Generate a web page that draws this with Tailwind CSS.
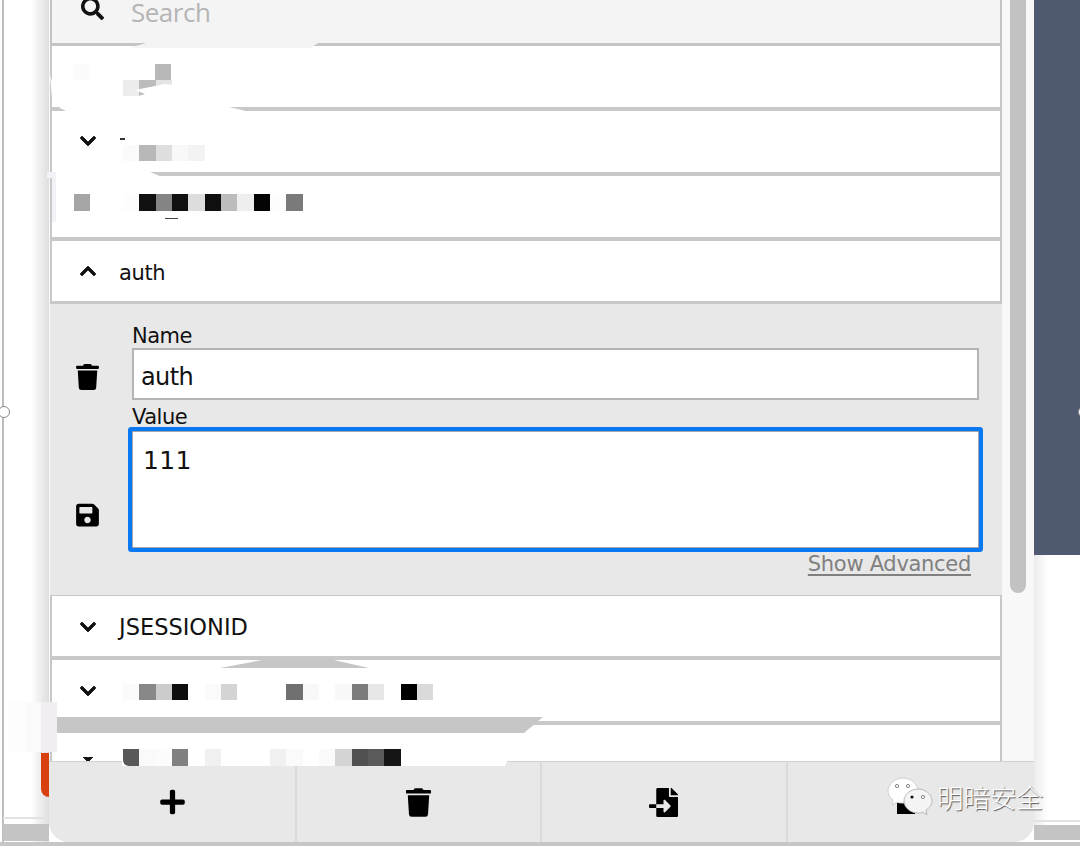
<!DOCTYPE html>
<html lang="en">
<head>
<meta charset="utf-8">
<script src="https://cdn.jsdelivr.net/npm/@tailwindcss/browser@4"></script>
</head>
<body class="bg-white">
<div class="relative w-[1080px] h-[846px] overflow-hidden bg-white font-['DejaVu_Sans',sans-serif] text-[#111]">

  <!-- page behind the panel -->
  <div class="absolute left-[4px] top-0 w-[45px] h-[846px] bg-gradient-to-r from-white from-60% to-[#dedede]"></div>
  <div class="absolute left-[2px] top-0 w-[1.5px] h-[842px] bg-[#bdbdbd]"></div>
  <div class="absolute left-[-2px] top-[406px] w-3 h-3 rounded-full bg-white border border-[#8a8a8a]"></div>
  <div class="absolute left-[41px] top-[753px] w-[12px] h-[44px] rounded-bl-[8px] bg-[#d9400f]"></div>
  <div class="absolute left-[3px] top-[817px] w-[46px] h-[2px] bg-[#e2e2e2]"></div>
  <div class="absolute left-[3px] top-[824px] w-[46px] h-[17px] bg-[#c4c4c4]"></div>
  <div class="absolute left-0 top-[842px] w-[1080px] h-[4px] bg-[#c6c6c6]"></div>
  <div class="absolute left-[1034px] top-0 w-[46px] h-[555px] bg-[#4f5970]"></div>
  <div class="absolute left-[1034px] top-[555px] w-[46px] h-[270px] bg-gradient-to-r from-[#ececec] from-0% to-white to-30%"></div>
  <div class="absolute left-[1034px] top-[820px] w-[46px] h-[2px] bg-[#e2e2e2]"></div>
  <div class="absolute left-[1034px] top-[825px] w-[46px] h-[15px] bg-[#c4c4c4]"></div>
  <div class="absolute left-[1078px] top-[406px] w-3 h-3 rounded-full bg-white border border-[#8a8a8a]"></div>

  <!-- panel -->
  <div class="absolute left-[49px] top-0 w-[985px] h-[842px] flex flex-col rounded-b-[20px] overflow-hidden bg-[#f8f8f8]">
    <div class="flex h-[761px] shrink-0">
      <!-- list -->
      <div class="w-[953px] pl-[1px] shrink-0 overflow-hidden">
        <!-- search -->
        <div class="h-[46px] bg-[#f4f4f4] border-x-2 border-b-[3px] border-[#c4c4c4] relative">
          <svg viewBox="0 0 512 512" class="absolute left-[29px] top-[-3px] w-[23px] h-[23px] fill-[#111]"><path d="M505 442.7L405.3 343c-4.5-4.5-10.6-7-17-7H372c27.6-35.3 44-79.7 44-128C416 93.1 322.9 0 208 0S0 93.1 0 208s93.1 208 208 208c48.3 0 92.7-16.4 128-44v16.3c0 6.4 2.5 12.5 7 17l99.7 99.7c9.4 9.4 24.6 9.4 33.9 0l28.3-28.3c9.4-9.4 9.4-24.6.1-34zM208 336c-70.7 0-128-57.2-128-128 0-70.7 57.2-128 128-128 70.7 0 128 57.2 128 128 0 70.7-57.2 128-128 128z"/></svg>
          <span class="absolute left-[79px] top-0 text-[26px] leading-[24px] tracking-[-0.5px] text-[#b4b4b4] font-['Open_Sans',sans-serif]">Search</span>
        </div>
        <!-- rows -->
        <div class="h-[65px] bg-white border-x-2 border-b-[4px] border-[#c8c8c8]"></div>
        <div class="h-[65px] bg-white border-x-2 border-b-[4px] border-[#c8c8c8] flex items-center pl-[28px]">
          <svg viewBox="0 0 448 512" class="w-[16px] h-[18px] mt-[-1px] fill-[#111] stroke-[#111] stroke-[24]"><path d="M207.029 381.476L12.686 187.132c-9.373-9.373-9.373-24.569 0-33.941l22.667-22.667c9.357-9.357 24.522-9.375 33.901-.04L224 284.505l154.745-154.021c9.379-9.335 24.544-9.317 33.901.04l22.667 22.667c9.373 9.373 9.373 24.569 0 33.941L240.971 381.476c-9.373 9.372-24.569 9.372-33.942 0z"/></svg>
        </div>
        <div class="h-[65px] bg-white border-x-2 border-b-[4px] border-[#c8c8c8]"></div>
        <div class="h-[63px] bg-white border-x-2 border-b-[3px] border-[#c8c8c8] flex items-center pl-[28px] gap-[23px]">
          <svg viewBox="0 0 448 512" class="w-[16px] h-[18px] fill-[#111] stroke-[#111] stroke-[24]"><path d="M240.971 130.524l194.343 194.343c9.373 9.373 9.373 24.569 0 33.941l-22.667 22.667c-9.357 9.357-24.522 9.375-33.901.04L224 227.495 69.255 381.516c-9.379 9.335-24.544 9.317-33.901-.04l-22.667-22.667c-9.373-9.373-9.373-24.569 0-33.941L207.03 130.525c9.372-9.373 24.568-9.373 33.941-.001z"/></svg>
          <span class="text-[21px] leading-[26px] tracking-[-0.4px] mt-[3px]">auth</span>
        </div>
        <!-- expanded -->
        <div class="h-[291px] bg-[#e8e8e8] flex pl-[2px] border-r-2 border-[#e8e8e8]">
          <div class="w-[80px] shrink-0 flex flex-col items-center pr-[10px] pt-[60px] gap-[112px]">
            <svg viewBox="0 0 448 512" class="w-[23px] h-[26px] fill-black"><path d="M432 32H312l-9.4-18.7A24 24 0 0 0 281.1 0H166.8a23.72 23.72 0 0 0-21.4 13.3L136 32H16A16 16 0 0 0 0 48v32a16 16 0 0 0 16 16h416a16 16 0 0 0 16-16V48a16 16 0 0 0-16-16zM53.2 467a48 48 0 0 0 47.9 45h245.8a48 48 0 0 0 47.9-45L416 128H32z"/></svg>
            <svg viewBox="0 0 448 512" class="w-[23px] h-[26px] fill-black"><path d="M433.941 129.941l-83.882-83.882A48 48 0 0 0 316.118 32H48C21.49 32 0 53.49 0 80v352c0 26.51 21.49 48 48 48h352c26.51 0 48-21.49 48-48V163.882a48 48 0 0 0-14.059-33.941zM224 416c-35.346 0-64-28.654-64-64 0-35.346 28.654-64 64-64s64 28.654 64 64c0 35.346-28.654 64-64 64zm96-304.52V212c0 6.627-5.373 12-12 12H76c-6.627 0-12-5.373-12-12V108c0-6.627 5.373-12 12-12h228.52c3.183 0 6.235 1.264 8.485 3.515l3.48 3.48A11.996 11.996 0 0 1 320 111.48z"/></svg>
          </div>
          <div class="w-[847px] shrink-0 flex flex-col">
            <div class="mt-[18px] h-[26px] pt-[1px] text-[21px] leading-[26px] tracking-[-0.5px]">Name</div>
            <div class="h-[52px] bg-white border-2 border-[#b4b4b4] pl-[7px] flex items-center text-[24px] leading-[30px] tracking-[-0.6px] pt-[5px]">auth</div>
            <div class="mt-[3px] h-[26px] pt-[1px] text-[21px] leading-[26px] tracking-[-0.5px]">Value</div>
            <div class="relative h-[117px] mt-[2px] bg-white border border-[#a8a8a8] rounded-[1px] shadow-[0_0_0_4px_#0a78f0] pl-[10px] pt-[9px] text-[25px] leading-[40px] tracking-[0.3px]">111</div>
            <div class="self-end mr-[8px] mt-[5px] text-[21px] leading-[22px] text-[#808080] underline underline-offset-[3px] tracking-[-0.3px]">Show Advanced</div>
          </div>
        </div>
        <div class="h-[65px] bg-white border-x-2 border-b-[4px] border-t border-[#c8c8c8] flex items-center pl-[28px] gap-[23px]">
          <svg viewBox="0 0 448 512" class="w-[16px] h-[18px] mt-[2px] fill-[#111] stroke-[#111] stroke-[24]"><path d="M207.029 381.476L12.686 187.132c-9.373-9.373-9.373-24.569 0-33.941l22.667-22.667c9.357-9.357 24.522-9.375 33.901-.04L224 284.505l154.745-154.021c9.379-9.335 24.544-9.317 33.901.04l22.667 22.667c9.373 9.373 9.373 24.569 0 33.941L240.971 381.476c-9.373 9.372-24.569 9.372-33.942 0z"/></svg>
          <span class="text-[22.5px] leading-[26px] tracking-[0px] mt-[2px]">JSESSIONID</span>
        </div>
        <div class="h-[65px] bg-white border-x-2 border-b-[4px] border-[#c8c8c8] flex items-center pl-[28px]">
          <svg viewBox="0 0 448 512" class="w-[16px] h-[18px] fill-[#111] stroke-[#111] stroke-[24]"><path d="M207.029 381.476L12.686 187.132c-9.373-9.373-9.373-24.569 0-33.941l22.667-22.667c9.357-9.357 24.522-9.375 33.901-.04L224 284.505l154.745-154.021c9.379-9.335 24.544-9.317 33.901.04l22.667 22.667c9.373 9.373 9.373 24.569 0 33.941L240.971 381.476c-9.373 9.372-24.569 9.372-33.942 0z"/></svg>
        </div>
        <div class="h-[65px] bg-white border-x-2 border-[#c8c8c8] pl-[28px] pt-[23px]">
          <svg viewBox="0 0 448 512" class="w-[16px] h-[18px] fill-[#111] stroke-[#111] stroke-[24]"><path d="M207.029 381.476L12.686 187.132c-9.373-9.373-9.373-24.569 0-33.941l22.667-22.667c9.357-9.357 24.522-9.375 33.901-.04L224 284.505l154.745-154.021c9.379-9.335 24.544-9.317 33.901.04l22.667 22.667c9.373 9.373 9.373 24.569 0 33.941L240.971 381.476c-9.373 9.372-24.569 9.372-33.942 0z"/></svg>
        </div>
      </div>
      <!-- scrollbar -->
      <div class="w-[32px] ml-[8px] shrink-0 bg-[#f8f8f8]">
        <div class="w-[16px] h-[593px] rounded-b-[8px] bg-[#c2c2c2]"></div>
      </div>
    </div>
    <!-- footer -->
    <div class="h-[81px] shrink-0 bg-[#e8e8e8] border-t border-[#d0d0d0] grid grid-cols-[248px_245px_246px_1fr]">
      <div class="flex items-center justify-center border-r-2 border-[#dadada]">
        <svg viewBox="0 0 448 512" class="w-[25px] h-[28px] fill-black"><path d="M416 208H272V64c0-17.67-14.33-32-32-32h-32c-17.67 0-32 14.33-32 32v144H32c-17.67 0-32 14.33-32 32v32c0 17.67 14.33 32 32 32h144v144c0 17.67 14.33 32 32 32h32c17.67 0 32-14.33 32-32V304h144c17.67 0 32-14.33 32-32v-32c0-17.67-14.33-32-32-32z"/></svg>
      </div>
      <div class="flex items-center justify-center border-r-2 border-[#dadada]">
        <svg viewBox="0 0 448 512" class="w-[25px] h-[29px] fill-black"><path d="M432 32H312l-9.4-18.7A24 24 0 0 0 281.1 0H166.8a23.72 23.72 0 0 0-21.4 13.3L136 32H16A16 16 0 0 0 0 48v32a16 16 0 0 0 16 16h416a16 16 0 0 0 16-16V48a16 16 0 0 0-16-16zM53.2 467a48 48 0 0 0 47.9 45h245.8a48 48 0 0 0 47.9-45L416 128H32z"/></svg>
      </div>
      <div class="flex items-center justify-center border-r-2 border-[#dadada] pr-[2px]">
        <svg viewBox="0 0 512 512" class="w-[29px] h-[29px] fill-black"><path d="M16 288c-8.8 0-16 7.2-16 16v32c0 8.8 7.2 16 16 16h112v-64zm489-183L407.1 7c-4.5-4.5-10.6-7-17-7H384v128h128v-6.1c0-6.3-2.5-12.4-7-16.9zm-153 31V0H152c-13.3 0-24 10.7-24 24v264h128v-65.2c0-14.3 17.3-21.4 27.4-11.3L379 308c6.6 6.7 6.6 17.4 0 24l-95.7 96.4c-10.1 10.1-27.4 3-27.4-11.3V352H128v136c0 13.3 10.7 24 24 24h336c13.3 0 24-10.7 24-24V160H376c-13.2 0-24-10.8-24-24z"/></svg>
      </div>
      <div></div>
    </div>
  </div>

  <!-- redaction smears over the list -->
  <svg class="absolute left-0 top-0 w-[1080px] h-[846px] pointer-events-none" viewBox="0 0 1080 846">
    <polygon points="132,47 150,42 320,42 310,48 130,48" fill="#f4f4f4"/>
    <polygon points="52,98 50,75 60,108 68,112 250,112 225,106 150,96 130,92" fill="#fff"/>
    <polygon points="49,172 150,172 162,177 49,177" fill="#fff"/>
    <polygon points="47,172 56,172 56,222 52,222 52,178 47,178" fill="#f2f2f6"/>
    <polygon points="262,660 334,660 369,668 220,668" fill="#c6c6c6"/>
    <polygon points="8,702 25,702 25,752 8,752" fill="#fdfdfd"/>
    <polygon points="25,702 41,702 41,752 25,752" fill="#fbfafb"/>
    <polygon points="41,702 57,702 57,752 41,752" fill="#f0eef2"/>
    <polygon points="57,717 543,717 524,733 57,733" fill="#c6c6c6"/>
    <polygon points="57,733 520,733 505,766 122,766 122,757 57,757" fill="#fff"/>
  </svg>

  <!-- pixelated values -->
  <div class="absolute left-[74px] top-[64px] w-4 h-4 bg-[#fbfbfb]"></div>
  <div class="absolute left-[155px] top-[64px] w-4 h-4 bg-[#b8b8b8]"></div>
  <div class="absolute left-[123px] top-[80px] flex h-4">
    <div class="w-[16.33px] bg-[#ececec]"></div><div class="w-[16.33px] bg-[#bcbcbc]"></div><div class="w-[16.33px] bg-[#e4e4e4]"></div>
  </div>
  <svg class="absolute left-[125px] top-[84px] w-[100px] h-[16px]" viewBox="0 0 100 16"><polygon points="10,6 40,0 60,2 100,16 0,16 20,10" fill="#fff"/></svg>
  <div class="absolute left-[120px] top-[138px] w-[5px] h-[2px] bg-[#333]"></div>
  <div class="absolute left-[123px] top-[145px] flex h-4">
    <div class="w-[16.33px] bg-[#fafafa]"></div><div class="w-[16.33px] bg-[#b8b8b8]"></div><div class="w-[16.33px] bg-[#dedede]"></div><div class="w-[16.33px] bg-[#f8f8f8]"></div><div class="w-[16.33px] bg-[#f3f3f3]"></div>
  </div>
  <div class="absolute left-[74px] top-[194px] flex h-[17px]">
    <div class="w-[16.33px] bg-[#a5a5a5]"></div><div class="w-[16.33px]"></div><div class="w-[16.33px]"></div><div class="w-[16.33px] bg-[#fdfdfd]"></div><div class="w-[16.33px] bg-[#111]"></div><div class="w-[16.33px] bg-[#848484]"></div><div class="w-[16.33px] bg-[#111]"></div><div class="w-[16.33px] bg-[#ddd]"></div><div class="w-[16.33px] bg-[#0f0f0f]"></div><div class="w-[16.33px] bg-[#bcbcbc]"></div><div class="w-[16.33px] bg-[#eee]"></div><div class="w-[16.33px] bg-[#040404]"></div><div class="w-[16.33px] bg-[#fdfdfd]"></div><div class="w-[16.33px] bg-[#7a7a7a]"></div>
  </div>
  <div class="absolute left-[165px] top-[218px] w-[13px] h-[1px] bg-[#444]"></div>
  <div class="absolute left-[123px] top-[684px] flex h-4">
    <div class="w-[16.33px] bg-[#fafafa]"></div><div class="w-[16.33px] bg-[#888]"></div><div class="w-[16.33px] bg-[#ccc]"></div><div class="w-[16.33px] bg-[#0e0e0e]"></div><div class="w-[16.33px]"></div><div class="w-[16.33px] bg-[#fafafa]"></div><div class="w-[16.33px] bg-[#d4d4d4]"></div><div class="w-[16.33px]"></div><div class="w-[16.33px]"></div><div class="w-[16.33px]"></div><div class="w-[16.33px] bg-[#707070]"></div><div class="w-[16.33px] bg-[#f8f8f8]"></div><div class="w-[16.33px]"></div><div class="w-[16.33px] bg-[#f8f8f8]"></div><div class="w-[16.33px] bg-[#7c7c7c]"></div><div class="w-[16.33px] bg-[#e6e6e6]"></div><div class="w-[16.33px]"></div><div class="w-[16.33px] bg-[#000]"></div><div class="w-[16.33px] bg-[#dadada]"></div>
  </div>
  <div class="absolute left-[123px] top-[749px] flex h-[17px]">
    <div class="w-[16.33px] bg-[#585858] rounded-bl-[6px]"></div><div class="w-[16.33px] bg-[#fafafa]"></div><div class="w-[16.33px] bg-[#fcfcfc]"></div><div class="w-[16.33px] bg-[#808080]"></div><div class="w-[16.33px]"></div><div class="w-[16.33px] bg-[#f0f0f0]"></div><div class="w-[16.33px]"></div><div class="w-[16.33px]"></div><div class="w-[16.33px]"></div><div class="w-[16.33px] bg-[#f0f0f0]"></div><div class="w-[16.33px] bg-[#fafafa]"></div><div class="w-[16.33px]"></div><div class="w-[16.33px] bg-[#fafafa]"></div><div class="w-[16.33px] bg-[#d4d4d4]"></div><div class="w-[16.33px] bg-[#505050]"></div><div class="w-[16.33px] bg-[#5a5a5a]"></div><div class="w-[16.33px] bg-[#151515]"></div>
  </div>

  <!-- watermark -->
  <div class="absolute left-[886px] top-[776px] flex items-center gap-[3px]">
    <svg viewBox="0 0 48 42" class="w-[48px] h-[42px]">
      <rect x="11" y="27" width="18" height="11" fill="#000"/>
      <path d="M17 2C9 2 2 8 2 15c0 4 2 7 5 9l-1 5 5-3c2 1 4 1 6 1 8 0 15-5 15-12S25 2 17 2z" fill="#fff" stroke="#d0d0d0" stroke-width="1"/>
      <circle cx="11" cy="10" r="1.6" fill="#fff" stroke="#666" stroke-width="0.8"/>
      <circle cx="22" cy="10" r="1.6" fill="#fff" stroke="#666" stroke-width="0.8"/>
      <path d="M32 13c-8 0-14 6-14 12s6 12 14 12c2 0 3 0 5-1l4 3-1-5c3-2 6-5 6-9 0-6-6-12-14-12z" fill="#f4f4f4" stroke="#b8b8b8" stroke-width="1"/>
      <circle cx="26" cy="21" r="1.6" fill="#111"/>
      <circle cx="37" cy="21" r="1.6" fill="#fff" stroke="#666" stroke-width="0.8"/>
    </svg>
    <span class="text-[26.5px] leading-[32px] text-white font-['Noto_Sans_CJK_SC',sans-serif] font-light [text-shadow:1px_1px_1px_#555]">明暗安全</span>
  </div>
</div>
</body>
</html>
